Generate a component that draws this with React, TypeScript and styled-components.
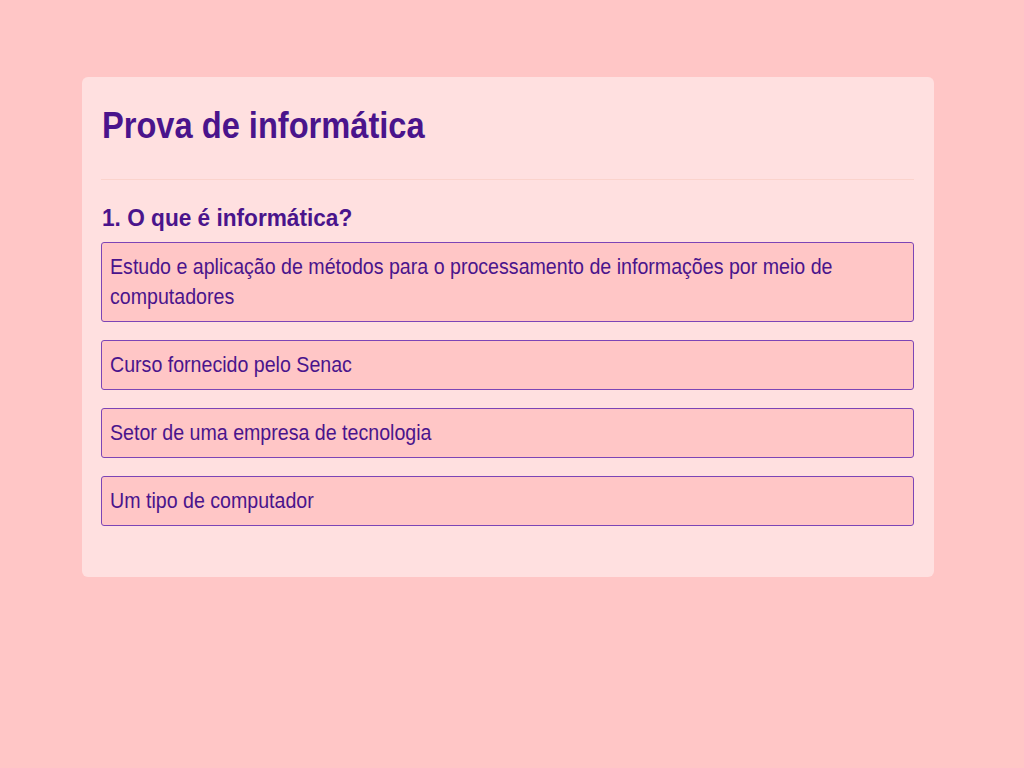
import React from "react";
import styled, { createGlobalStyle } from "styled-components";

const Global = createGlobalStyle`
  html, body { margin: 0; padding: 0; background: #ffc6c6; }
  body { font-family: "Liberation Sans", Arial, sans-serif; }
`;

const Page = styled.div`
  padding: 77px 0 0 82px;
`;

const Card = styled.div`
  width: 852px;
  box-sizing: border-box;
  background: #ffe0e0;
  border-radius: 6px;
  padding: 20px 20px 51px 19px;
`;

/* condensed text: the reference uses a narrow face */
const Narrow = styled.span<{ $scale: number }>`
  display: block;
  width: calc(100% / ${(p) => p.$scale});
  transform: scaleX(${(p) => p.$scale});
  transform-origin: left center;
`;

const Title = styled.h1`
  margin: 0;
  padding: 8px 0 32px 1px;
  font-size: 36px;
  line-height: 42px;
  font-weight: 700;
  color: #4a148c;
  border-bottom: 1px solid #fbd3cc;
`;

const Question = styled.h2`
  margin: 23px 0 0;
  padding-left: 1px;
  font-size: 24px;
  line-height: 30px;
  font-weight: 700;
  color: #4a148c;
`;

const Options = styled.div`
  display: flex;
  flex-direction: column;
  gap: 18px;
  margin-top: 9px;
`;

const Option = styled.div`
  border: 1px solid #7c45b6;
  border-radius: 3px;
  background: #ffc6c6;
  padding: 9px 8px;
  font-size: 22px;
  line-height: 30px;
  color: #4a148c;
  overflow: hidden;
`;

const options = [
  "Estudo e aplicação de métodos para o processamento de informações por meio de computadores",
  "Curso fornecido pelo Senac",
  "Setor de uma empresa de tecnologia",
  "Um tipo de computador",
];

export default function App() {
  return (
    <>
      <Global />
      <Page>
        <Card>
          <Title>
            <Narrow $scale={0.906}>Prova de informática</Narrow>
          </Title>
          <Question>
            <Narrow $scale={0.943}>1. O que é informática?</Narrow>
          </Question>
          <Options>
            {options.map((o) => (
              <Option key={o}>
                <Narrow $scale={0.891}>{o}</Narrow>
              </Option>
            ))}
          </Options>
        </Card>
      </Page>
    </>
  );
}
